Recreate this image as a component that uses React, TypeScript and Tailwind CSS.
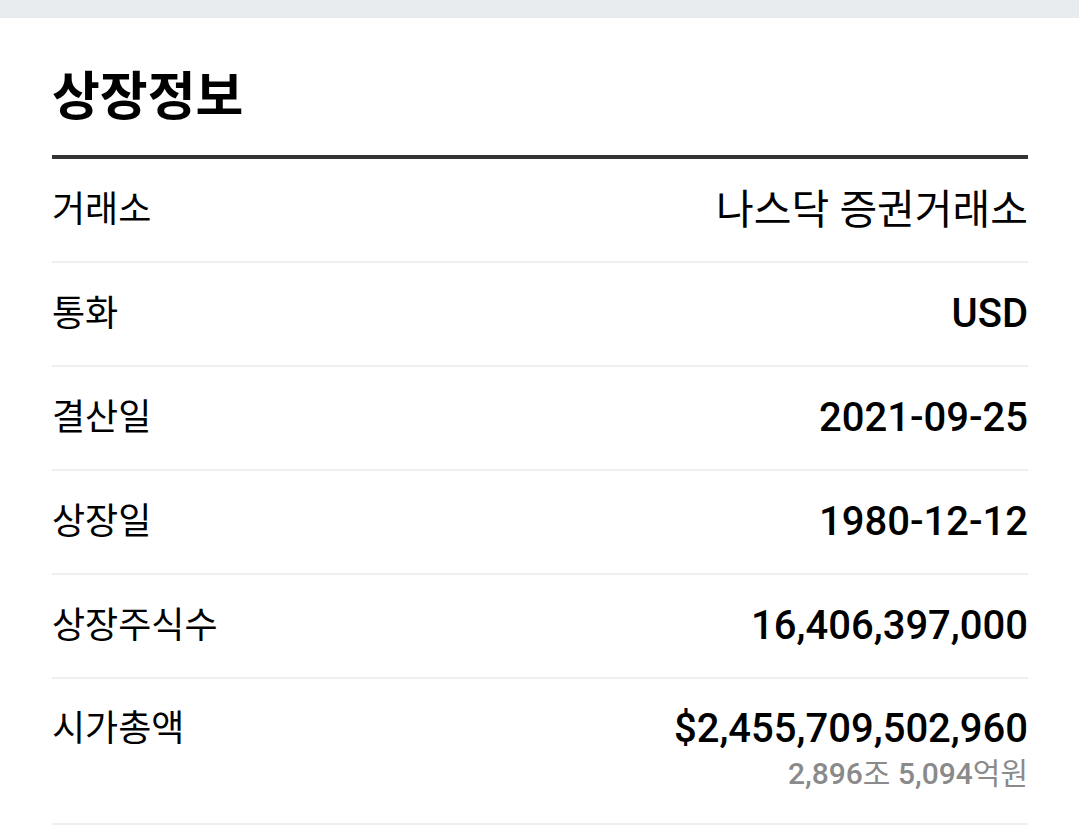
export default function App() {
  const rows = [
    { label: "거래소", value: "나스닥 증권거래소", regular: true },
    { label: "통화", value: "USD" },
    { label: "결산일", value: "2021-09-25" },
    { label: "상장일", value: "1980-12-12" },
    { label: "상장주식수", value: "16,406,397,000" },
  ];

  return (
    <div
      className="min-h-screen bg-white text-black"
      style={{ fontFamily: 'Roboto, "Noto Sans CJK KR", sans-serif' }}
    >
      {/* top gray band */}
      <div className="h-[18px] bg-[#e9ecef]" />

      <section className="pl-[52px] pr-[51px]">
        <h2 className="pt-[50px] pb-[27px] text-[52px] leading-[60px] font-bold">
          상장정보
        </h2>
        <div className="h-[4px] bg-[#333333]" />

        {rows.map((row) => (
          <div
            key={row.label}
            className="flex items-center justify-between h-[104px] border-b-2 border-[#efefef]"
          >
            <span className="text-[36px] leading-[52px]">{row.label}</span>
            <span
              className={
                row.regular
                  ? "text-[41px] leading-[52px]"
                  : "text-[40px] leading-[52px] font-medium"
              }
            >
              {row.value}
            </span>
          </div>
        ))}

        <div className="flex justify-between pt-[24px] pb-[30px] border-b-2 border-[#efefef]">
          <span className="text-[36px] leading-[52px]">시가총액</span>
          <div className="flex flex-col items-end">
            <span className="text-[40px] leading-[52px] font-medium">
              $2,455,709,502,960
            </span>
            <span className="text-[30px] leading-[38px] text-[#8a8a8a]">
              <span className="font-medium">2,896</span>조{" "}
              <span className="font-medium">5,094</span>억원
            </span>
          </div>
        </div>
      </section>
    </div>
  );
}
